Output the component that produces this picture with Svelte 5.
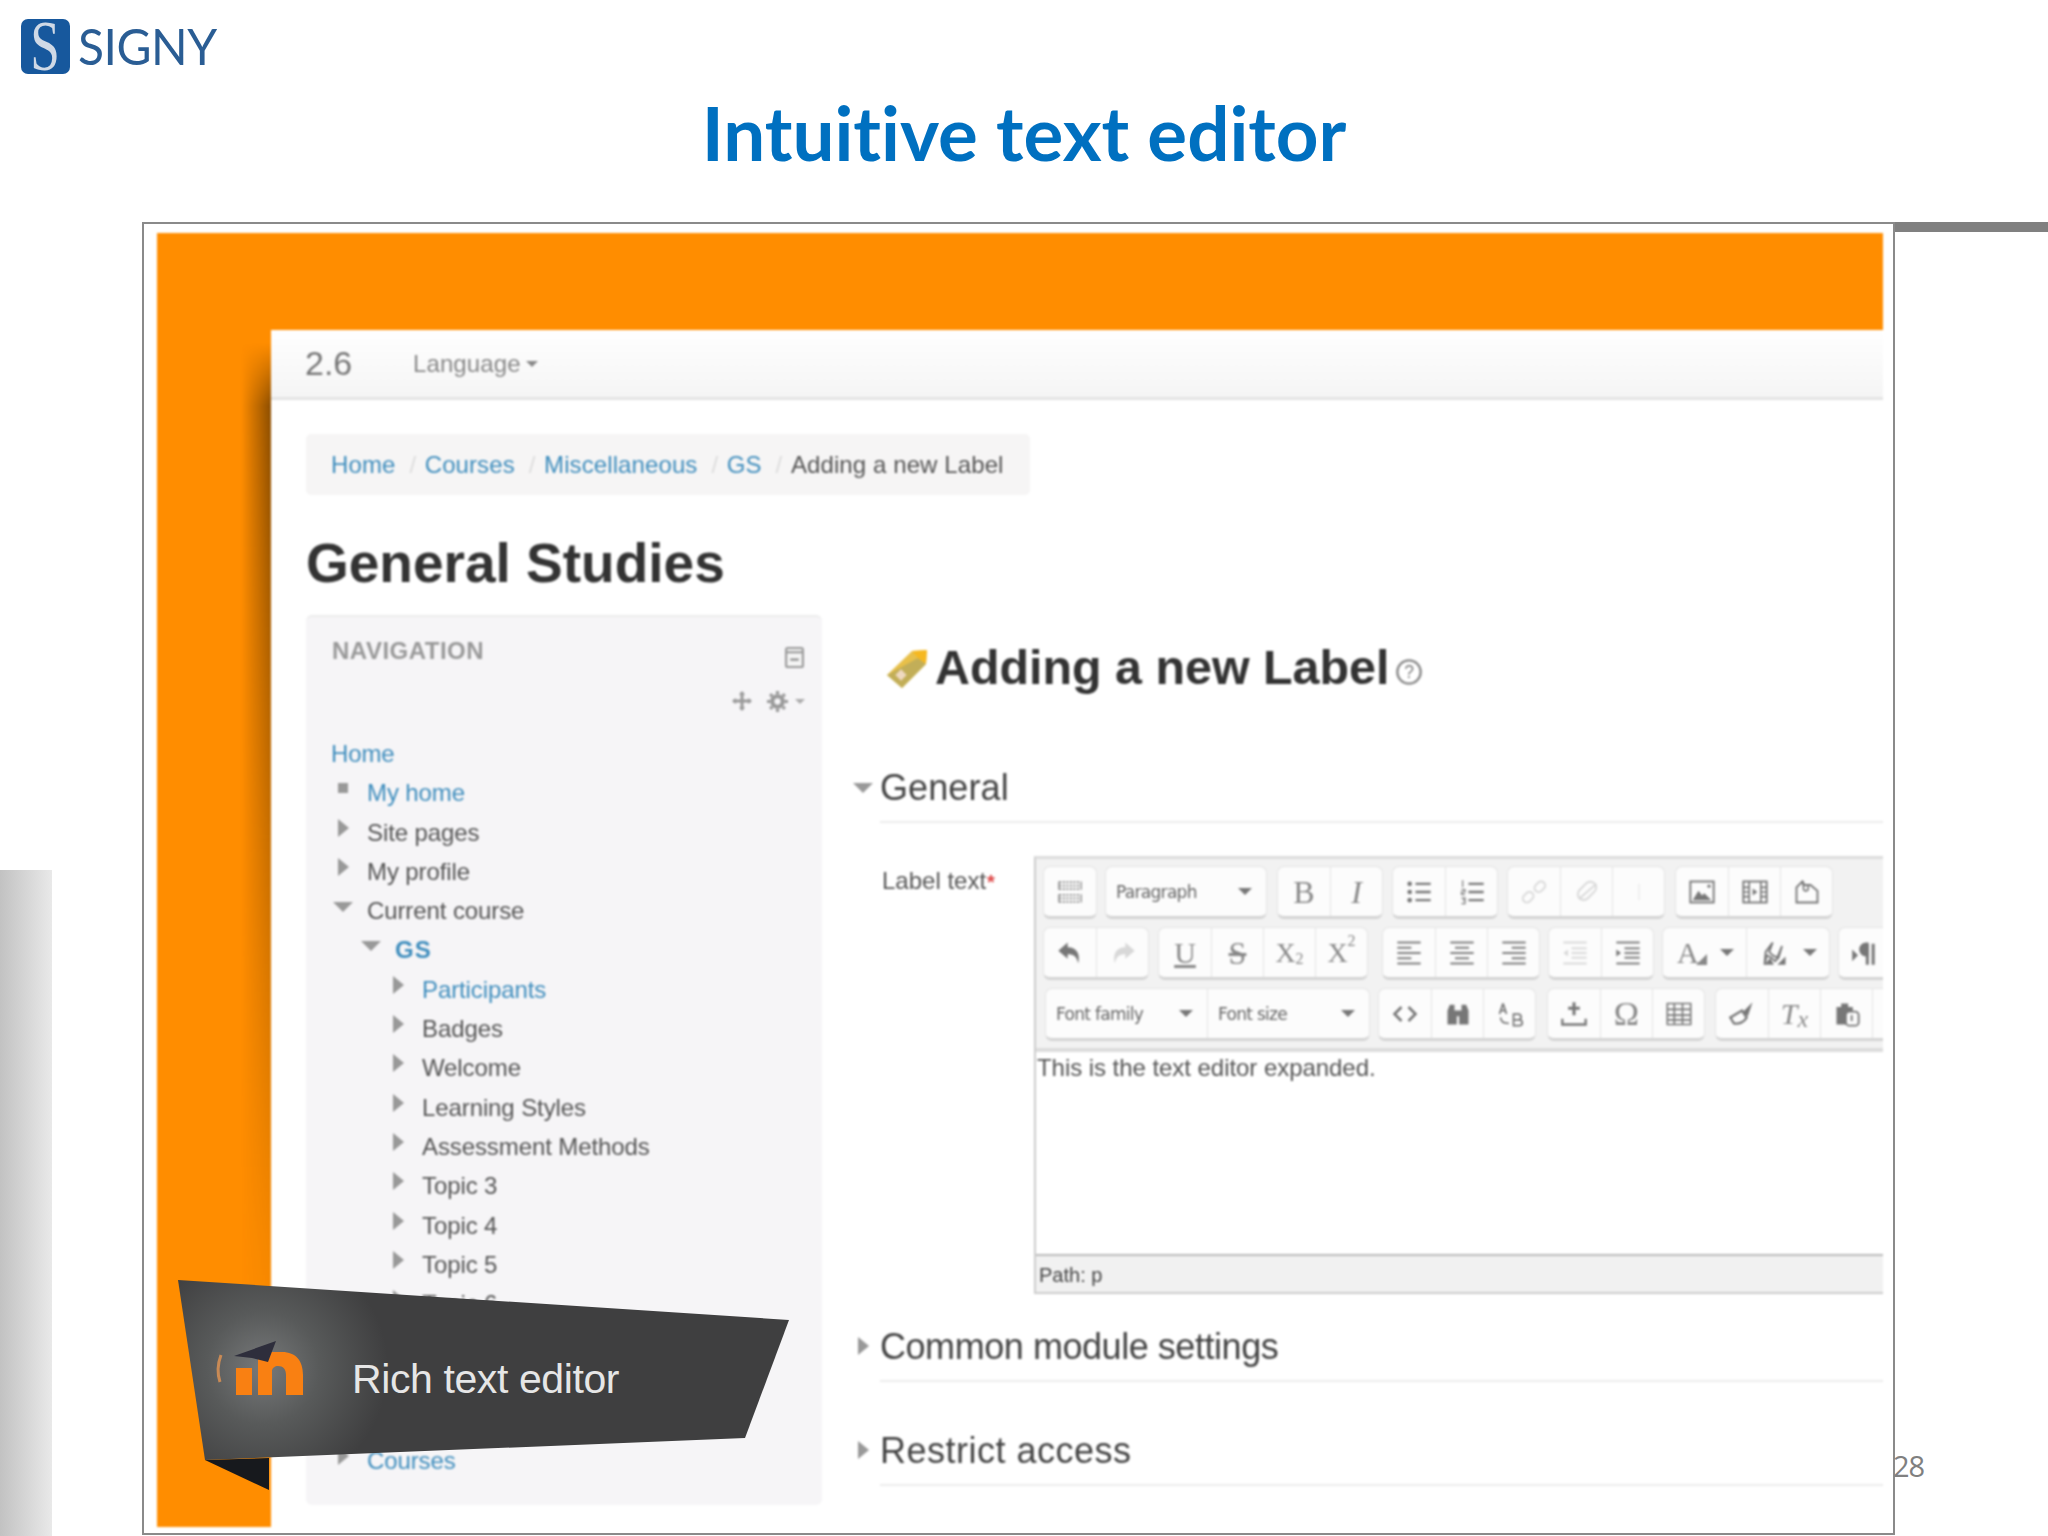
<script>
  const L = 'stroke="currentColor" fill="none"';
  const lines = (arr) => arr.map(([a,b,y]) => `<path d="M${a} ${y}H${b}" stroke="currentColor" stroke-width="1.6"/>`).join('');
  const icons = {
    grid: `<path d="M3 3.5h18M3 6.5h18M3 9.5h18M3 14.5h18M3 17.5h18M3 20.5h18" stroke="currentColor" stroke-width="1.5" stroke-dasharray="1.5 1.5"/><path d="M2.5 3v7M21.5 3v7M2.5 14v7M21.5 14v7" stroke="currentColor"/>`,
    ul: `<circle cx="4" cy="5" r="2" fill="currentColor"/><circle cx="4" cy="12" r="2" fill="currentColor"/><circle cx="4" cy="19" r="2" fill="currentColor"/><path d="M9 5h13M9 12h13M9 19h13" stroke="currentColor" stroke-width="2"/>`,
    ol: `<path d="M4 2v6M3 10h3v2H3v2h3M3 17h3v2H4h2v3H3" ${L}/><path d="M9 5h13M9 12h13M9 19h13" stroke="currentColor" stroke-width="2"/>`,
    link: `<g ${L} stroke-width="1.6"><rect x="2" y="13" width="10" height="7" rx="3.5" transform="rotate(-45 7 16.5)"/><rect x="12" y="4" width="10" height="7" rx="3.5" transform="rotate(-45 17 7.5)"/></g>`,
    unlink: `<g ${L} stroke-width="1.6"><rect x="3" y="6" width="18" height="10" rx="5" transform="rotate(-45 12 11)"/><path d="M5 18L20 5"/></g>`,
    anchor: `<path d="M12 5v14" stroke="currentColor" stroke-width="2" opacity=".3"/>`,
    image: `<rect x="2" y="3" width="20" height="18" ${L} stroke-width="1.6"/><path d="M4 19l5-8 3 4 2-2 6 6z" fill="currentColor"/><circle cx="18" cy="7" r="1.4" fill="currentColor"/>`,
    media: `<rect x="2" y="3" width="20" height="18" ${L} stroke-width="1.6"/><path d="M7 3v18M17 3v18M2 8h5M2 12h5M2 16h5M17 8h5M17 12h5M17 16h5" stroke="currentColor" stroke-width="1.4"/><path d="M10 9l4 3-4 3z" fill="currentColor"/>`,
    file: `<path d="M3 8l5-5 1 3h6l6 5v10H3z" ${L} stroke-width="1.6"/><path d="M9 3v6a2 2 0 0 0 4 0V6" ${L} stroke-width="1.4"/>`,
    undo: `<path d="M10 3L2 10l8 7v-4c5 0 8 2 9 8 2-8-1-14-9-14z" fill="currentColor"/>`,
    redo: `<path d="M14 3l8 7-8 7v-4c-5 0-8 2-9 8-2-8 1-14 9-14z" fill="currentColor"/>`,
    left: lines([[2,22,3],[2,14,7.5],[2,22,12],[2,14,16.5],[2,22,21]]),
    center: lines([[2,22,3],[6,18,7.5],[2,22,12],[6,18,16.5],[2,22,21]]),
    right: lines([[2,22,3],[10,22,7.5],[2,22,12],[10,22,16.5],[2,22,21]]),
    outdent: lines([[2,22,3],[9,22,8],[9,22,12],[9,22,16],[2,22,21]]) + `<path d="M6 9l-4 3 4 3z" fill="currentColor"/>`,
    indent: lines([[2,22,3],[9,22,8],[9,22,12],[9,22,16],[2,22,21]]) + `<path d="M2 9l4 3-4 3z" fill="currentColor"/>`,
    brush: `<path d="M3 22l2-8 4 2 3 3 3-3 3-10-4 10-4-2-3-3 3-8-6 8z" ${L} stroke-width="1.6"/><path d="M3 22l5-6 3 6zM14 22l7-7v7z" fill="currentColor"/>`,
    ltr: `<path d="M1 9l5 5-5 5z" fill="currentColor"/><path d="M14 4v18M19 4v18" stroke="currentColor" stroke-width="2.6"/><path d="M20 3h-7a6 6 0 0 0 0 12h2V3z" fill="currentColor"/>`,
    code: `<path d="M9 6l-6 6 6 6M15 6l6 6-6 6" ${L} stroke-width="2.2"/>`,
    find: `<path d="M3 21V9l2-5h4v5h6V4h4l2 5v12h-8v-7h-2v7z" fill="currentColor"/>`,
    replace: `<path d="M6 3l3 9M6 3L3 12M4 9h4" ${L} stroke-width="1.5"/><path d="M4 15c0 4 3 5 7 5" ${L} stroke-width="1.5"/><path d="M15 12h4a2 2 0 0 1 0 5h-4zM15 17h5a2 2 0 0 1 0 5h-5z" ${L} stroke-width="1.5"/>`,
    insert: `<path d="M12 2v11M7 7h10" stroke="currentColor" stroke-width="2.6"/><path d="M2 16v5h20v-5" ${L} stroke-width="2"/>`,
    table: `<path d="M2 3h20v18H2zM2 8h20M2 13h20M2 17h20M8 3v18M15 3v18" ${L} stroke-width="1.4"/>`,
    clean: `<path d="M2 15l10-6 4 6c-2 4-7 6-11 5z" ${L} stroke-width="2"/><path d="M13 10l8-8-4 12z" fill="currentColor"/>`,
    paste: `<path d="M3 6h14v15H3z" fill="currentColor"/><path d="M7 3h6v4H7z" fill="currentColor"/><rect x="11" y="10" width="11" height="12" rx="3" fill="#fbfbfb" stroke="currentColor" stroke-width="1.6"/><path d="M16 13v5" stroke="currentColor" stroke-width="1.6"/>`
  };

  const c = (icon, off) => ({ icon, off });
  const t = (text, cls, off) => ({ text, cls, off });
  const rows = [
    [
      { gap: 0, cells: [c('grid')] , w: 54 },
      { gap: 8, sel: [['Paragraph', 160]] },
      { gap: 10, cells: [t('B', 'b'), t('I', 'i')] },
      { gap: 9, cells: [c('ul'), c('ol')] },
      { gap: 9, cells: [c('link', true), c('unlink', true), c('anchor', true)] },
      { gap: 10, cells: [c('image'), c('media'), c('file')] }
    ],
    [
      { gap: 0, cells: [c('undo'), c('redo', true)] },
      { gap: 9, cells: [t('U', 'u'), t('S', 's'), t('X', 'x', 'sub'), t('X', 'x', 'sup')] },
      { gap: 14, cells: [c('left'), c('center'), c('right')] },
      { gap: 8, cells: [c('outdent', true), c('indent')] },
      { gap: 8, split: [{ text: 'A' }, { icon: 'brush' }] },
      { gap: 8, cells: [c('ltr')] }
    ],
    [
      { gap: 2, sel: [['Font family', 161], ['Font size', 162]] },
      { gap: 8, cells: [c('code'), c('find'), c('replace')] },
      { gap: 11, cells: [c('insert'), t('Ω', 'o'), c('table')] },
      { gap: 10, cells: [c('clean'), t('T', 'tx', 'x'), c('paste'), { empty: true }] }
    ]
  ];

  const crumbs = ['Home', 'Courses', 'Miscellaneous', 'GS'];
  const nav = [
    { t: 'Home', lv: 0, link: true },
    { t: 'My home', lv: 1, link: true, ic: 'dot' },
    { t: 'Site pages', lv: 1, ic: 'r' },
    { t: 'My profile', lv: 1, ic: 'r' },
    { t: 'Current course', lv: 1, ic: 'd' },
    { t: 'GS', lv: 2, link: true, ic: 'd', bold: true },
    { t: 'Participants', lv: 3, link: true, ic: 'r' },
    { t: 'Badges', lv: 3, ic: 'r' },
    { t: 'Welcome', lv: 3, ic: 'r' },
    { t: 'Learning Styles', lv: 3, ic: 'r' },
    { t: 'Assessment Methods', lv: 3, ic: 'r' },
    { t: 'Topic 3', lv: 3, ic: 'r' },
    { t: 'Topic 4', lv: 3, ic: 'r' },
    { t: 'Topic 5', lv: 3, ic: 'r' },
    { t: 'Topic 6', lv: 3, ic: 'r' },
    { spacer: true },
    { t: 'Courses', lv: 1, link: true, ic: 'r' }
  ];
</script>

<div class="slide">
  <div class="leftbar"></div>
  <div class="rightbar"></div>
  <div class="pagenum">28</div>

  <header class="head">
    <div class="logo">
      <span class="mark"><span>S</span></span>
      <span class="word">SIGNY</span>
    </div>
    <h1 class="title">Intuitive text editor</h1>
  </header>

  <div class="frame">
    <div class="shot">
      <div class="edge"></div>
      <div class="panel">
        <div class="topbar">
          <span class="ver">2.6</span>
          <span class="lang">Language</span><i class="caret"></i>
        </div>
        <div class="content">
          <div class="crumbs">
            {#each crumbs as item}
              <span class="lnk">{item}</span><span class="sep">/</span>
            {/each}
            <span class="cur">Adding a new Label</span>
          </div>
          <h2 class="course">General Studies</h2>
          <div class="cols">
            <aside class="block">
              <div class="bhead">
                <span class="btitle">NAVIGATION</span>
                <svg class="minus" viewBox="0 0 18 20"><rect x="1" y="1" width="16" height="18" rx="1.5" fill="#f4f4f4" stroke="#999" stroke-width="2"/><path d="M1 5h16" stroke="#999" stroke-width="2"/><path d="M5 12h8" stroke="#888" stroke-width="2"/></svg>
              </div>
              <div class="tools">
                <svg class="move" viewBox="0 0 20 20"><path d="M10 1v18M1 10h18" stroke="#999" stroke-width="3"/><path d="M10 0l3 4H7zM10 20l3-4H7zM0 10l4-3v6zM20 10l-4-3v6z" fill="#999"/></svg>
                <svg class="gear" viewBox="0 0 20 20"><circle cx="10" cy="10" r="5" fill="none" stroke="#999" stroke-width="4"/><path d="M10 0v20M0 10h20M3 3l14 14M17 3L3 17" stroke="#999" stroke-width="3" stroke-dasharray="3 14 3"/></svg>
                <i class="caret small"></i>
              </div>
              <ul class="tree">
                {#each nav as n}
                  {#if n.spacer}
                    <li class="sp"></li>
                  {:else}
                    <li class="lv{n.lv}">
                      {#if n.ic}
                        <span class="ic"><i class={n.ic}></i></span>
                      {/if}
                      <span class:lnk={n.link} class:strong={n.bold}>{n.t}</span>
                    </li>
                  {/if}
                {/each}
              </ul>
            </aside>

            <main class="main">
              <div class="pagehead">
                <svg class="tag" viewBox="0 0 44 42">
                  <path d="M2 27L27 3l15-1-1 14-24 24z" fill="#e8c04a"/>
                  <path d="M2 27l15 13 24-24-8-6z" fill="#c2ae58"/>
                  <path d="M27 3l15-1-1 14-8-6z" fill="#f6b820"/>
                  <rect x="12" y="23" width="8" height="8" transform="rotate(45 16 27)" fill="#efd9c0"/>
                </svg>
                <span class="pt">Adding a new Label</span>
                <svg class="help" viewBox="0 0 24 24"><circle cx="12" cy="12" r="10" fill="#fff" stroke="#888" stroke-width="2"/><text x="12" y="17" text-anchor="middle" font-size="15" fill="#777" font-family="Liberation Sans">?</text></svg>
              </div>

              <div class="sec first">
                <span class="stri"><i class="d"></i></span>
                <div class="sin">General</div>
              </div>

              <div class="form">
                <div class="lab">Label text<b>*</b></div>
                <div class="editor">
                  <div class="bars">
                    {#each rows as row}
                      <div class="row">
                        {#each row as g}
                          <div class="grp" style="margin-left:{g.gap}px">
                            {#if g.sel}
                              {#each g.sel as s}
                                <div class="cell sel" style="width:{s[1]}px"><span>{s[0]}</span><i></i></div>
                              {/each}
                            {:else if g.split}
                              {#each g.split as s}
                                <div class="cell splitc">
                                  {#if s.text}
                                    <span class="g a">{s.text}<svg viewBox="0 0 10 10"><path d="M10 0v10H0z" fill="currentColor"/></svg></span>
                                  {:else}
                                    <svg class="ico" viewBox="0 0 24 24">{@html icons[s.icon]}</svg>
                                  {/if}
                                  <i></i>
                                </div>
                              {/each}
                            {:else}
                              {#each g.cells as b}
                                <div class="cell" class:wide={g.w} class:off={b.off === true}>
                                  {#if b.icon}
                                    <svg class="ico" viewBox="0 0 24 24">{@html icons[b.icon]}</svg>
                                  {:else if b.text}
                                    <span class="g {b.cls}">{b.text}{#if b.off === 'sub'}<sub>2</sub>{:else if b.off === 'sup'}<sup>2</sup>{:else if b.off === 'x'}<em>x</em>{/if}</span>
                                  {/if}
                                </div>
                              {/each}
                            {/if}
                          </div>
                        {/each}
                      </div>
                    {/each}
                  </div>
                  <div class="area">This is the text editor expanded.</div>
                  <div class="path">Path: p</div>
                </div>
              </div>

              <div class="sec mid">
                <span class="stri"><i class="r"></i></span>
                <div class="sin">Common module settings</div>
              </div>
              <div class="sec last">
                <span class="stri"><i class="r"></i></span>
                <div class="sin">Restrict access</div>
              </div>
            </main>
          </div>
        </div>
      </div>
    </div>

    <div class="banner">
      <svg class="bshape" viewBox="0 0 611 210">
        <defs>
          <radialGradient id="glow" gradientUnits="userSpaceOnUse" cx="85" cy="88" r="125">
            <stop offset="0" stop-color="#77797a"/>
            <stop offset=".45" stop-color="#585a5a"/>
            <stop offset="1" stop-color="#3f3f40"/>
          </radialGradient>
        </defs>
        <path d="M27 180l64 30v-32z" fill="#17191d"/>
        <polygon points="0,0 611,40 567,158 27,180" fill="url(#glow)"/>
        <path d="M42 102c-3-9-2-19 1-27" stroke="#c98a55" stroke-width="3" fill="none"/>
        <path d="M58 115V88h16v27z" fill="#f98012"/>
        <path d="M80 115V72h24c14 0 21 9 21 23v20h-17V95c0-6-3-9-8-9-3 0-6 2-6 5v24z" fill="#f98012"/>
        <path d="M56 76l42-15-8 21-16-4z" fill="#2e2e3c"/>
      </svg>
      <span class="btext">Rich text editor</span>
    </div>
  </div>
</div>

<style>
  :global(body) { margin: 0; background: #fff; }
  .slide {
    position: relative;
    width: 2048px;
    height: 1536px;
    overflow: hidden;
    background: #fff;
    font-family: "Liberation Sans", Arial, sans-serif;
  }
  .leftbar {
    position: absolute; left: 0; top: 870px; width: 52px; height: 666px;
    background: linear-gradient(90deg, #c2c2c2, #e9e9e9);
  }
  .rightbar {
    position: absolute; left: 1895px; top: 222px; right: 0; height: 10px;
    background: #808080;
  }
  .pagenum {
    position: absolute; left: 1893px; top: 1448px;
    font: 29px/36px "Open Sans", sans-serif;
    letter-spacing: -1px;
    color: #808080;
    z-index: 2;
  }
  .head { height: 222px; box-sizing: border-box; padding: 19px 0 0 21px; }
  .logo { display: flex; align-items: center; height: 55px; gap: 8px; }
  .mark {
    width: 49px; height: 55px; flex: none;
    background: #17589d;
    border-radius: 7px;
    display: flex; align-items: center; justify-content: center;
  }
  .mark span {
    font: 72px/55px "Liberation Serif", serif;
    color: #cfd9e6;
    transform: scaleX(.74);
  }
  .word {
    font: 50px/55px Lato, sans-serif;
    color: #2a5d94;
    letter-spacing: -.5px;
    transform-origin: left;
    transform: scaleX(.96);
  }
  .title {
    margin: 15px 0 0 -21px;
    text-align: center;
    font: 700 74.5px/86px Lato, sans-serif;
    font-variant-ligatures: none;
    color: #0070c0;
  }
  .frame {
    position: relative;
    box-sizing: border-box;
    margin-left: 142px;
    width: 1753px;
    height: 1313px;
    border: 2px solid #8a8a8a;
    padding: 9px 10px 6px 13px;
  }
  .shot {
    position: relative;
    height: 100%;
    box-sizing: border-box;
    background: #ff8d00;
    padding: 97px 0 0 114px;
    filter: blur(.8px);
  }
  .edge {
    position: absolute; left: 84px; top: 110px; width: 30px; height: 1050px;
    background: linear-gradient(90deg, rgba(90,50,0,0), rgba(90,50,0,.7));
    -webkit-mask-image: linear-gradient(transparent, #000 6%, rgba(0,0,0,.7) 30%, rgba(0,0,0,.35) 60%, rgba(0,0,0,.1) 85%, transparent);
    mask-image: linear-gradient(transparent, #000 6%, rgba(0,0,0,.7) 30%, rgba(0,0,0,.35) 60%, rgba(0,0,0,.1) 85%, transparent);
  }
  .panel { position: relative; height: 100%; background: #fff; overflow: hidden; }
  .topbar {
    display: flex; align-items: center;
    height: 70px; box-sizing: border-box;
    padding: 0 0 0 34px;
    background: linear-gradient(#fff, #f5f5f5);
    border-bottom: 3px solid #e4e4e4;
    color: #777;
  }
  .ver { font-size: 34px; width: 108px; }
  .lang { font-size: 24px; color: #888; letter-spacing: .1px; }
  .caret {
    display: inline-block; margin-left: 5px;
    border: 6px solid transparent; border-top-color: #888; border-bottom: 0;
  }
  .caret.small { margin-left: 4px; border-width: 5px; border-bottom: 0; border-top-color: #aaa; }
  .content { padding: 34px 0 0 35px; }
  .crumbs {
    display: flex; align-items: center;
    width: 724px; height: 61px; box-sizing: border-box;
    padding-left: 25px;
    background: #f6f5f5;
    border-radius: 5px;
    font-size: 24px;
    letter-spacing: .1px;
  }
  .lnk { color: #3e8dbd; }
  .sep { color: #ddd; margin: 0 8.5px 0 14px; }
  .cur { color: #555; }
  .course {
    margin: 37px 0 0;
    font: 700 55px/62px "Liberation Sans", Arial, sans-serif;
    color: #333;
  }
  .cols { display: flex; margin-top: 21px; }
  .block {
    width: 516px; height: 890px; box-sizing: border-box; flex: none;
    background: #f6f5f7;
    border-top: 2px solid #ececec;
    border-radius: 6px;
    padding: 0 0 0 25px;
  }
  .bhead {
    display: flex; justify-content: space-between;
    padding: 20px 18px 0 1px;
    height: 50px; box-sizing: border-box;
  }
  .btitle { font: 700 24px/28px "Liberation Sans", sans-serif; color: #999; letter-spacing: .5px; }
  .minus { width: 19px; height: 21px; margin-top: 10px; }
  .tools {
    display: flex; align-items: center; justify-content: flex-end; gap: 11px;
    padding-right: 17px; margin-top: 16px; height: 36px;
  }
  .move { width: 20px; height: 20px; }
  .gear { width: 21px; height: 21px; margin-left: 4px; }
  .tools .caret { margin-left: -4px; }
  .tree {
    list-style: none; margin: 15px 0 0; padding: 0;
    font-size: 24px; color: #555;
    letter-spacing: -.1px;
  }
  .tree li { display: flex; height: 39.3px; line-height: 39.3px; white-space: nowrap; }
  .tree li.sp { height: 117.9px; }
  .lv1 { padding-left: 0; }
  .lv2 { padding-left: 28px; }
  .lv3 { padding-left: 55px; }
  .ic { width: 36px; flex: none; position: relative; }
  .ic i, .stri i { position: absolute; display: block; }
  i.r { border: 9px solid transparent; border-left: 11px solid #999; border-right: 0; }
  i.d { border: 10px solid transparent; border-top: 10px solid #999; border-bottom: 0; }
  i.dot { width: 10px; height: 10px; background: #999; }
  .ic i.r { left: 7px; top: 6px; }
  .ic i.d { left: 2px; top: 11px; }
  .ic i.dot { left: 7px; top: 10px; }
  .strong { font-weight: 700; letter-spacing: 1.2px; }
  .main { flex: 1; min-width: 0; margin-left: 31px; padding-top: 27px; }
  .pagehead { display: flex; align-items: center; height: 50px; padding-left: 32px; }
  .tag { width: 44px; height: 42px; margin-top: 4px; flex: none; }
  .pt { font: 700 48.4px/50px "Liberation Sans", sans-serif; color: #333; margin-left: 6px; }
  .help { width: 28px; height: 28px; margin: 10px 0 0 6px; }
  .sec { display: flex; }
  .first { margin-top: 69px; }
  .mid { margin-top: 26px; }
  .last { margin-top: 42px; }
  .stri { position: relative; width: 27px; flex: none; }
  .stri i.d { left: 0; top: 22px; }
  .stri i.r { left: 5px; top: 17px; }
  .sin {
    flex: 1; height: 62px; box-sizing: border-box;
    font-size: 36px; line-height: 54px; color: #444;
    letter-spacing: .1px;
    border-bottom: 2px solid #ececec;
  }
  .mid .sin { letter-spacing: -.45px; }
  .last .sin { letter-spacing: .5px; }
  .form { display: flex; margin-top: 33px; padding-left: 29px; }
  .lab { width: 152px; flex: none; font-size: 24px; line-height: 50px; color: #555; }
  .lab b { color: #d44; font-size: 20px; margin-left: 1px; }
  .editor {
    flex: 1; min-width: 0; height: 438px; box-sizing: border-box;
    display: flex; flex-direction: column;
    border-left: 2px solid #ccc;
    border-top: 3px solid #ddd;
    border-bottom: 2px solid #ccc;
    overflow: hidden;
  }
  .bars {
    background: #f2f2f2;
    border-bottom: 4px solid #dcdcdc;
    height: 193px; box-sizing: border-box;
    padding: 7px 0 0 7px;
    flex: none;
  }
  .row { display: flex; height: 54px; margin-bottom: 7px; }
  .grp {
    display: flex; flex: none;
    height: 53px; box-sizing: border-box;
    background: #fcfcfc;
    border: 1px solid #e4e4e4;
    border-bottom: 3px solid #d4d4d4;
    border-radius: 7px;
  }
  .cell {
    width: 52px; box-sizing: border-box; height: 100%;
    display: flex; align-items: center; justify-content: center;
    color: #777;
  }
  .cell + .cell { border-left: 1px solid #e4e4e4; }
  .cell.off { color: #d8d8d8; }
  .ico { width: 28px; height: 28px; }
  .sel {
    justify-content: space-between; padding: 0 14px 0 10px;
    font: 17px "DejaVu Sans", sans-serif; color: #666; letter-spacing: -.7px;
  }
  .sel i, .splitc i {
    display: block; border: 7px solid transparent; border-top: 7px solid #777; border-bottom: 0; flex: none;
  }
  .splitc { width: 83px; justify-content: space-between; padding: 0 12px 0 14px; }
  .g { font-family: "Liberation Serif", serif; font-size: 32px; line-height: 1; color: #888; }
  .g.i { font-style: italic; }
  .g.u { text-decoration: underline; font-size: 30px; }
  .g.s { text-decoration: line-through; font-size: 32px; }
  .g.x { font-size: 28px; display: flex; }
  .g sub, .g sup { font-size: 16px; line-height: 1; position: relative; }
  .g sub { top: 12px; vertical-align: baseline; }
  .g sup { top: -6px; vertical-align: baseline; }
  .g.o { font-size: 34px; }
  .g.tx { font-style: italic; font-size: 30px; display: flex; }
  .g.tx em { font-size: 24px; position: relative; top: 8px; }
  .g.a { font-size: 30px; display: flex; align-items: flex-end; }
  .g.a svg { width: 11px; height: 11px; margin: 0 0 3px -3px; }
  .area {
    flex: 1; background: #fff;
    font-size: 24px; line-height: 32px; color: #555;
    padding: 0 0 0 1px; letter-spacing: -.05px;
  }
  .path {
    height: 38px; box-sizing: border-box; flex: none;
    background: #f1f1f1;
    border-top: 2px solid #bbb;
    padding-left: 3px;
    font-size: 20px; line-height: 38px; color: #444;
  }
  .banner {
    position: absolute; left: 34px; top: 1056px;
    width: 611px; height: 210px;
    display: flex; align-items: flex-start;
  }
  .bshape { position: absolute; inset: 0; width: 100%; height: 100%; }
  .btext {
    position: relative; margin: 74px 0 0 174px;
    font-size: 41px; line-height: 50px; color: #e6e6e6; letter-spacing: -.4px;
    white-space: nowrap;
  }
</style>
